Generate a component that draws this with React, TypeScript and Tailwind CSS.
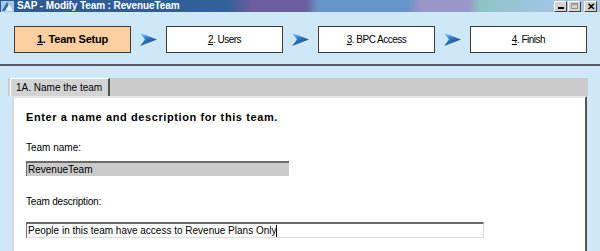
import React from "react";

function StepArrow() {
  return (
    <svg width="17" height="13" viewBox="0 0 17 13" className="shrink-0">
      <defs>
        <linearGradient id="ag" x1="0" y1="0" x2="0.6" y2="1">
          <stop offset="0" stopColor="#8fd8f4" />
          <stop offset="0.45" stopColor="#2f80cc" />
          <stop offset="1" stopColor="#183f88" />
        </linearGradient>
      </defs>
      <polygon points="0,0 17,6.5 0,13 5,6.5" fill="url(#ag)" />
    </svg>
  );
}

function Step({ n, label, active }: { n: string; label: string; active?: boolean }) {
  return (
    <div
      className={`w-[117px] h-[27px] shrink-0 flex items-center justify-center border border-[#3a3a3a] text-black ${
        active ? "bg-[#fbcf9f] font-bold text-[11px] tracking-[-0.2px]" : "bg-white text-[10px] tracking-[-0.5px]"
      }`}
    >
      <span className="underline">{n}</span>
      <span>. {label}</span>
    </div>
  );
}

export default function App() {
  return (
    <div className="w-[600px] h-[251px] overflow-hidden bg-[#cfe8f8] font-['Liberation_Sans',Arial,sans-serif]">
      {/* title bar */}
      <div className="h-[12px] flex items-center justify-between bg-[linear-gradient(90deg,#2d5a8f_0%,#34609a_38%,#6a5e9f_42%,#6a5e9f_51%,#6794c8_53%,#6794c8_68%,#9a96c8_70%,#9a96c8_78%,#8ec3c2_80%,#9fc4e2_90%,#a9cbe7_100%)]">
        <div className="flex items-center gap-[3px] pl-[1px]">
          <svg width="13" height="11" viewBox="0 0 13 11">
            <rect x="0" y="0" width="13" height="11" fill="#a8c8e8" />
            <polygon points="1,10 6,1 11,10" fill="#2d6bb0" />
            <polygon points="4,10 8,3 12,10" fill="#e8f2fb" />
          </svg>
          <span className="text-[10px] leading-[12px] font-bold tracking-[-0.1px] text-white">SAP - Modify Team : RevenueTeam</span>
        </div>
        <div className="flex items-center gap-[1px] pr-[3px]">
          <div className="w-[13px] h-[11px] bg-[#d6d3ce] border border-t-white border-l-white border-b-[#404040] border-r-[#404040] flex items-end justify-center pb-[2px]">
            <div className="w-[6px] h-[2px] bg-black" />
          </div>
          <div className="w-[13px] h-[11px] bg-[#d6d3ce] border border-t-white border-l-white border-b-[#404040] border-r-[#404040] flex items-center justify-center">
            <div className="w-[7px] h-[6px] border border-[#9a9a9a] border-t-2" />
          </div>
          <div className="ml-[2px] w-[13px] h-[11px] bg-[#d6d3ce] border border-t-white border-l-white border-b-[#404040] border-r-[#404040] flex items-center justify-center text-[10px] leading-[9px] font-bold text-black">
            ✕
          </div>
        </div>
      </div>

      {/* steps */}
      <div className="mt-[14px] pl-[14px] flex items-center">
        <Step n="1" label="Team Setup" active />
        <div className="w-[35px] flex justify-center"><StepArrow /></div>
        <Step n="2" label="Users" />
        <div className="w-[35px] flex justify-center"><StepArrow /></div>
        <Step n="3" label="BPC Access" />
        <div className="w-[35px] flex justify-center"><StepArrow /></div>
        <Step n="4" label="Finish" />
      </div>

      <div className="mt-[11px] h-[2px] bg-[#4f5961]" />

      {/* tab panel */}
      <div className="mt-[12px] ml-[8px] w-[580px]">
        <div className="h-[18px] bg-[#cbcbcb] pl-[2px] flex items-end">
          <div className="h-[18px] pl-[5px] pr-[6px] bg-[#d3d3d3] border-t border-l border-t-white border-l-white border-r-2 border-r-[#505050] flex items-center text-[10px] text-black">
            1A. Name the team
          </div>
        </div>
        <div className="ml-[4px] w-[575px] h-[160px] bg-white border-l-2 border-l-[#d8d8d8] border-t-2 border-t-[#e4e4e4] border-r-2 border-r-[#555] pl-[12px] pt-[12px]">
          <div className="text-[11px] leading-[14px] font-bold tracking-[0.6px] text-black">
            Enter a name and description for this team.
          </div>
          <div className="mt-[17px] text-[10px] leading-[14px] text-black">Team name:</div>
          <div className="mt-[6px] w-[263px] h-[15px] bg-[#cbcbcb] border-t-2 border-l border-t-[#6a6a6a] border-l-[#6a6a6a] flex items-center pl-[1px] text-[10px] text-black">
            RevenueTeam
          </div>
          <div className="mt-[19px] text-[10px] leading-[14px] tracking-[-0.2px] text-black">Team description:</div>
          <div className="mt-[13px] w-[458px] h-[16px] bg-white border-t-2 border-l border-b border-r border-t-[#6a6a6a] border-l-[#6a6a6a] border-b-[#dcdcdc] border-r-[#dcdcdc] flex items-center pl-[1px] text-[10px] text-black">
            People in this team have access to Revenue Plans Only
            <span className="w-[1px] h-[12px] bg-black" />
          </div>
        </div>
      </div>
    </div>
  );
}
